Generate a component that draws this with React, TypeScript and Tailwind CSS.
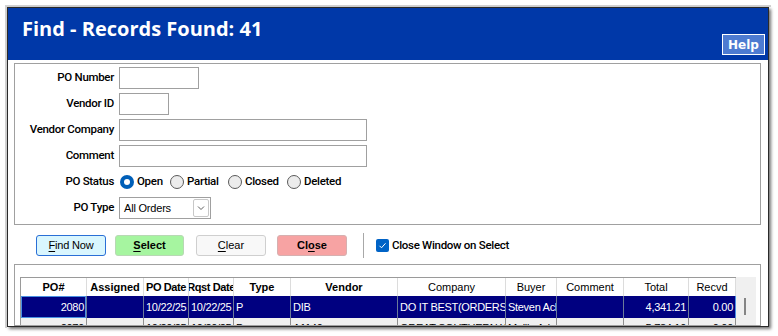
import React from "react";

const cols = [
  { h: "PO#", w: "w-[66px]", bold: true },
  { h: "Assigned", w: "w-[57px]", bold: true },
  { h: "PO Date", w: "w-[45px]", bold: true },
  { h: "Rqst Date", w: "w-[45px]", bold: true },
  { h: "Type", w: "w-[57px]", bold: true },
  { h: "Vendor", w: "w-[107px]", bold: true },
  { h: "Company", w: "w-[108px]", bold: false },
  { h: "Buyer", w: "w-[51px]", bold: false },
  { h: "Comment", w: "w-[67px]", bold: false },
  { h: "Total", w: "w-[65px]", bold: false },
  { h: "Recvd", w: "w-[47px]", bold: false },
];

const rightCols = [0, 9, 10];

const row1 = ["2080", "", "10/22/25", "10/22/25", "P", "DIB", "DO IT BEST(ORDERS)", "Steven Ackerman", "", "4,341.21", "0.00"];
const row2 = ["2079", "", "10/20/25", "10/20/25", "P", "A1140", "GREAT SOUTHERN WOOD", "Mollie Adams", "", "5,784.10", "0.00"];

function Radio({ label, checked, w }: { label: string; checked?: boolean; w: string }) {
  return (
    <div className={`flex items-center ${w}`}>
      {checked ? (
        <span className="w-[14px] h-[14px] rounded-full bg-[#005fb8] flex items-center justify-center">
          <span className="w-[6px] h-[6px] rounded-full bg-white" />
        </span>
      ) : (
        <span className="w-[14px] h-[14px] rounded-full border border-[#5a5a5a] bg-[#ececec]" />
      )}
      <span className="ml-[3px] text-[11.5px] font-medium tracking-[-0.3px] font-['Roboto',Arial,sans-serif]">{label}</span>
    </div>
  );
}

function Label({ children }: { children: React.ReactNode }) {
  return (
    <div className="w-[99px] mr-[5px] text-right text-[11.5px] font-medium tracking-[-0.3px] text-black font-['Roboto',Arial,sans-serif]">
      {children}
    </div>
  );
}

export default function App() {
  return (
    <div className="w-[778px] h-[336px] bg-white overflow-hidden font-['Liberation_Sans',Arial,sans-serif] text-black">
      <div className="ml-[5px] mt-[5px] w-[766px] h-[323px] border-l-2 border-t-2 border-[#d2d2d2]">
        <div className="w-[762px] h-[320px] border border-[#2a2a2a] shadow-[2px_2px_3px_rgba(0,0,0,0.55)] bg-white flex flex-col overflow-hidden">
          {/* Header */}
          <div className="h-[52px] shrink-0 bg-[#0038a8] flex justify-between">
            <div className="pt-[7px] pl-[14px] leading-[27px] text-[20px] font-bold text-white font-['Open_Sans',sans-serif]">
              Find - Records Found: 41
            </div>
            <div className="self-end mb-[5px] mr-[3px] w-[43px] h-[21px] border border-white bg-[#4d7bd1] flex items-center justify-center text-white text-[12px] font-bold font-['DejaVu_Sans',Verdana,sans-serif]">
              Help
            </div>
          </div>

          {/* Form panel */}
          <div className="ml-[6px] mt-[3px] w-[747px] shrink-0 border border-[#a0a0a0] pt-[3px] pb-[5px] flex flex-col gap-[4px]">
            <div className="flex items-center h-[22px]">
              <Label>PO Number</Label>
              <div className="w-[80px] h-[22px] border border-[#a0a0a0] bg-white" />
            </div>
            <div className="flex items-center h-[22px]">
              <Label>Vendor ID</Label>
              <div className="w-[50px] h-[22px] border border-[#a0a0a0] bg-white" />
            </div>
            <div className="flex items-center h-[22px]">
              <Label>Vendor Company</Label>
              <div className="w-[248px] h-[22px] border border-[#a0a0a0] bg-white" />
            </div>
            <div className="flex items-center h-[22px]">
              <Label>Comment</Label>
              <div className="w-[248px] h-[22px] border border-[#a0a0a0] bg-white" />
            </div>
            <div className="flex items-center h-[22px]">
              <Label>PO Status</Label>
              <div className="flex items-center ml-[1px]">
                <Radio label="Open" checked w="w-[50px]" />
                <Radio label="Partial" w="w-[58px]" />
                <Radio label="Closed" w="w-[59px]" />
                <Radio label="Deleted" w="w-[60px]" />
              </div>
            </div>
            <div className="flex items-center h-[22px]">
              <Label>PO Type</Label>
              <div className="w-[92px] h-[22px] border border-[#a0a0a0] bg-white flex items-center justify-between pl-[4px] pr-[1px]">
                <span className="text-[11px] tracking-[-0.2px]">All Orders</span>
                <span className="w-[16px] h-[18px] border border-[#c8c8c8] rounded-[2px] flex items-center justify-center">
                  <svg width="10" height="10" viewBox="0 0 10 10">
                    <path d="M2 3.5 L5 6.5 L8 3.5" fill="none" stroke="#606060" strokeWidth="1" />
                  </svg>
                </span>
              </div>
            </div>
          </div>

          {/* Buttons */}
          <div className="mt-[10px] h-[21px] shrink-0 flex items-center pl-[28px]">
            <div className="w-[70px] h-[21px] border border-[#2a6fd6] rounded-[3px] bg-[#d9f6fe] flex items-center justify-center text-[11px] tracking-[-0.2px]">
              <span className="underline underline-offset-2">F</span>ind Now
            </div>
            <div className="ml-[9px] w-[69px] h-[21px] border border-[#b8d8b4] rounded-[3px] bg-[#a6f5a0] flex items-center justify-center text-[11px] font-bold">
              <span className="underline underline-offset-2">S</span>elect
            </div>
            <div className="ml-[12px] w-[70px] h-[21px] border border-[#cfcfcf] rounded-[3px] bg-[#f8f8f8] flex items-center justify-center text-[11px]">
              <span className="underline underline-offset-2">C</span>lear
            </div>
            <div className="ml-[11px] w-[70px] h-[21px] border border-[#d6b0b0] rounded-[3px] bg-[#f7a3a3] flex items-center justify-center text-[11px] font-bold">
              Cl<span className="underline underline-offset-2">o</span>se
            </div>
            <div className="ml-[16px] w-px h-[25px] bg-[#a8a8a8]" />
            <div className="ml-[12px] w-[13px] h-[13px] rounded-[2px] bg-[#0063c6] flex items-center justify-center">
              <svg width="9" height="9" viewBox="0 0 9 9">
                <path d="M1.5 4.8 L3.5 6.8 L7.5 2.3" fill="none" stroke="white" strokeWidth="1" />
              </svg>
            </div>
            <span className="ml-[3px] text-[11.5px] font-medium tracking-[-0.3px] font-['Roboto',Arial,sans-serif]">Close Window on Select</span>
          </div>

          {/* Table panel */}
          <div className="ml-[6px] mt-[8px] w-[747px] flex-1 border border-[#a0a0a0] pt-[12px] pl-[5px] overflow-hidden">
            <div className="flex">
              <div className="border-l border-t border-[#9a9a9a]">
                {/* header */}
                <div className="flex h-[18px] bg-white">
                  {cols.map((c, i) => (
                    <div
                      key={i}
                      className={`${c.w} h-[18px] border-r border-[#dcdcdc] flex items-center justify-center overflow-hidden whitespace-nowrap text-[11px] ${c.bold ? "font-bold" : ""} ${i === 2 || i === 3 ? "tracking-[-0.4px]" : ""}`}
                    >
                      {c.h}
                    </div>
                  ))}
                </div>
                {/* selected row */}
                <div className="flex h-[22px] bg-[#000080] text-white">
                  {cols.map((c, i) => (
                    <div
                      key={i}
                      className={`${c.w} h-[22px] border-r ${i === 10 ? "border-[#4a90e2]" : "border-[#6b7a99]"} flex items-center overflow-hidden whitespace-nowrap text-[11px] tracking-[-0.3px] ${rightCols.includes(i) ? "justify-end pr-[2px]" : "pl-[2px]"} ${i === 0 ? "shadow-[inset_0_0_0_1px_#4a90e2]" : ""}`}
                    >
                      {row1[i]}
                    </div>
                  ))}
                </div>
                {/* second row */}
                <div className="flex h-[22px] bg-[#f0f0f0]">
                  {cols.map((c, i) => (
                    <div
                      key={i}
                      className={`${c.w} h-[22px] border-r border-[#909090] flex items-start pt-[2px] overflow-hidden whitespace-nowrap text-[11px] tracking-[-0.3px] ${rightCols.includes(i) ? "justify-end pr-[2px]" : "pl-[2px]"}`}
                    >
                      {row2[i]}
                    </div>
                  ))}
                </div>
              </div>
              {/* scrollbar */}
              <div className="w-[20px] h-[70px] bg-[#f0f0f0] pt-[21px] pl-[8px]">
                <div className="w-[2px] h-[17px] bg-[#858585]" />
              </div>
            </div>
          </div>
        </div>
      </div>
    </div>
  );
}
